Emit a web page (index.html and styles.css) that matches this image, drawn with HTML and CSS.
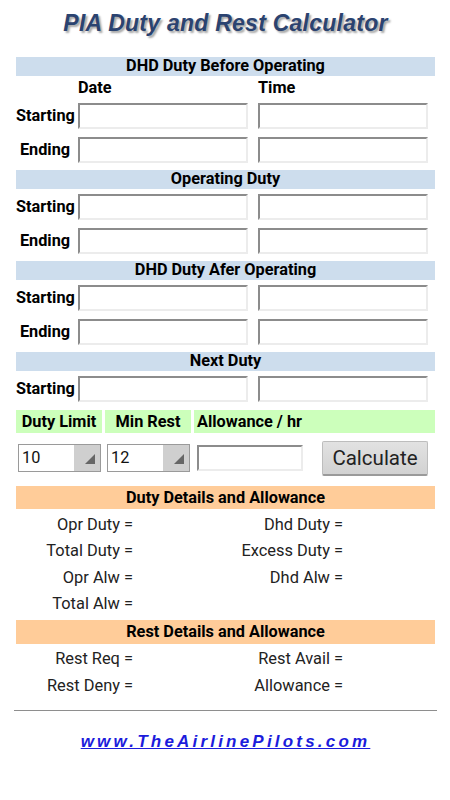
FILE: index.html
```html
<!DOCTYPE html>
<html>
<head>
<meta charset="utf-8">
<link rel="stylesheet" href="styles.css">
</head>
<body>
<div class="page">
  <h1 class="title">PIA Duty and Rest Calculator</h1>

  <section class="sec">
    <div class="bar blue">DHD Duty Before Operating</div>
    <div class="colhead"><span class="lbl"></span><span class="ch">Date</span><span class="ch ch2">Time</span></div>
    <div class="row"><span class="lbl">Starting</span><input class="field" type="text"><input class="field f2" type="text"></div>
    <div class="row"><span class="lbl">Ending</span><input class="field" type="text"><input class="field f2" type="text"></div>
  </section>

  <section class="sec">
    <div class="bar blue">Operating Duty</div>
    <div class="row"><span class="lbl">Starting</span><input class="field" type="text"><input class="field f2" type="text"></div>
    <div class="row"><span class="lbl">Ending</span><input class="field" type="text"><input class="field f2" type="text"></div>
  </section>

  <section class="sec">
    <div class="bar blue">DHD Duty Afer Operating</div>
    <div class="row"><span class="lbl">Starting</span><input class="field" type="text"><input class="field f2" type="text"></div>
    <div class="row"><span class="lbl">Ending</span><input class="field" type="text"><input class="field f2" type="text"></div>
  </section>

  <section class="sec">
    <div class="bar blue">Next Duty</div>
    <div class="row"><span class="lbl">Starting</span><input class="field" type="text"><input class="field f2" type="text"></div>
  </section>

  <div class="greenrow">
    <div class="g gc">Duty Limit</div>
    <div class="g gc">Min Rest</div>
    <div class="g gl">Allowance / hr</div>
  </div>

  <div class="controls">
    <div class="sel sel1"><span class="selval">10</span><span class="selbtn"><svg width="10" height="10" viewBox="0 0 10 10"><polygon points="0,10 10,10 10,0" fill="#666"/></svg></span></div>
    <div class="sel sel2"><span class="selval">12</span><span class="selbtn"><svg width="10" height="10" viewBox="0 0 10 10"><polygon points="0,10 10,10 10,0" fill="#666"/></svg></span></div>
    <input class="field allow" type="text">
    <button class="calc" type="button">Calculate</button>
  </div>

  <div class="bar orange obar1">Duty Details and Allowance</div>
  <div class="results r1">
    <span class="rl">Opr Duty =</span><span class="rv"></span><span class="rl">Dhd Duty =</span><span class="rv"></span>
    <span class="rl">Total Duty =</span><span class="rv"></span><span class="rl">Excess Duty =</span><span class="rv"></span>
    <span class="rl">Opr Alw =</span><span class="rv"></span><span class="rl">Dhd Alw =</span><span class="rv"></span>
    <span class="rl">Total Alw =</span><span class="rv"></span><span class="rl"></span><span class="rv"></span>
  </div>

  <div class="bar orange obar2">Rest Details and Allowance</div>
  <div class="results r2">
    <span class="rl">Rest Req =</span><span class="rv"></span><span class="rl">Rest Avail =</span><span class="rv"></span>
    <span class="rl">Rest Deny =</span><span class="rv"></span><span class="rl">Allowance =</span><span class="rv"></span>
  </div>

  <hr class="rule">

  <div class="linkwrap"><a class="site" href="#">www.TheAirlinePilots.com</a></div>
</div>
</body>
</html>
```

FILE: styles.css
```css
html, body {
  margin: 0;
  padding: 0;
  background: #ffffff;
}
body {
  font-family: Roboto, "Liberation Sans", sans-serif;
  color: #000;
}
.page {
  width: 419px;
  margin-left: 16px;
}
.title {
  margin: 0;
  padding-top: 10px;
  height: 57.3px;
  box-sizing: border-box;
  line-height: 26px;
  font-family: "Liberation Sans", Arial, sans-serif;
  font-size: 23px;
  font-weight: bold;
  font-style: italic;
  letter-spacing: 0.25px;
  color: #2b4370;
  text-align: center;
  text-shadow: 2px 2px 2px rgba(0,0,0,0.35);
}
.sec + .sec {
  margin-top: 7.5px;
}
.bar {
  height: 18.5px;
  line-height: 18.5px;
  text-align: center;
  font-weight: bold;
  font-size: 16.3px;
}
.blue { background: #cddded; }
.orange { background: #ffcc99; height: 23.5px; line-height: 23.5px; }
.colhead {
  display: flex;
  margin-top: 3.5px;
  height: 18px;
  line-height: 18px;
  font-weight: bold;
  font-size: 16.3px;
}
.colhead .ch { width: 170px; }
.colhead .ch2 { margin-left: 10px; }
.lbl {
  width: 58px;
  margin-right: 4px;
  text-align: center;
  font-weight: bold;
  font-size: 16.3px;
}
.row {
  display: flex;
  align-items: center;
  margin-top: 8px;
  height: 26px;
}
.bar + .row { margin-top: 5px; }
.colhead + .row { margin-top: 5.5px; }
.field {
  box-sizing: border-box;
  width: 170px;
  height: 26px;
  margin: 0;
  padding: 0 4px;
  background: #fff;
  border-style: solid;
  border-width: 2px 2px 2px 2px;
  border-color: #8c8c8c #ececec #ececec #8c8c8c;
  border-radius: 0;
  font-family: Roboto, sans-serif;
  font-size: 16px;
  outline: none;
}
.f2 { margin-left: 10px; }
.greenrow {
  display: grid;
  grid-template-columns: 86px 86px 1fr;
  column-gap: 3px;
  margin-top: 8.2px;
  height: 23.3px;
}
.g {
  background: #ccffbb;
  line-height: 23.3px;
  font-weight: bold;
  font-size: 16.3px;
}
.gc { text-align: center; }
.gl { padding-left: 3px; }
.controls {
  display: flex;
  align-items: center;
  margin-top: 7.7px;
  height: 35px;
}
.sel {
  box-sizing: border-box;
  display: flex;
  width: 82.5px;
  height: 28px;
  border: 1px solid #9a9a9a;
  background: #fff;
}
.sel1 { margin-left: 2px; }
.sel2 { margin-left: 6.5px; }
.selval {
  flex: 1;
  padding-left: 3px;
  line-height: 26px;
  font-size: 16.3px;
  color: #111;
}
.selbtn {
  width: 26px;
  background: #cfcfcf;
  display: flex;
  align-items: flex-end;
  justify-content: flex-end;
  padding: 0 5px 7px 0;
  box-sizing: border-box;
}
.selbtn svg { display: block; }
.allow {
  width: 106px;
  margin-left: 7.5px;
}
.calc {
  box-sizing: border-box;
  width: 106px;
  height: 35px;
  margin: 0 0 0 19px;
  padding: 0;
  font-family: Roboto, sans-serif;
  font-size: 20.5px;
  color: #222;
  background: linear-gradient(#e2e2e2, #d2d2d2);
  border: 1px solid #bdbdbd;
  border-bottom: 2px solid #9a9a9a;
  border-radius: 2px;
}
.obar1 { margin-top: 10px; }
.results {
  display: grid;
  grid-template-columns: 117px 100px 110px 1fr;
  grid-auto-rows: 26.3px;
  font-size: 16.4px;
  color: #222;
}
.r1 { margin-top: 2.5px; }
.r2 { margin-top: 2.5px; }
.rl {
  text-align: right;
  line-height: 26.3px;
}
.obar2 { margin-top: 3.2px; }
.rule {
  margin: 10.7px 0 0 -2px;
  width: 423px;
  height: 0;
  border: 0;
  border-top: 1px solid #8e8e8e;
}
.linkwrap {
  margin-top: 21px;
  text-align: center;
  line-height: 20px;
}
.site {
  font-family: "Liberation Sans", Arial, sans-serif;
  font-size: 17px;
  font-weight: bold;
  font-style: italic;
  letter-spacing: 3.2px;
  color: #1c1cdc;
  text-decoration: underline;
}
```
